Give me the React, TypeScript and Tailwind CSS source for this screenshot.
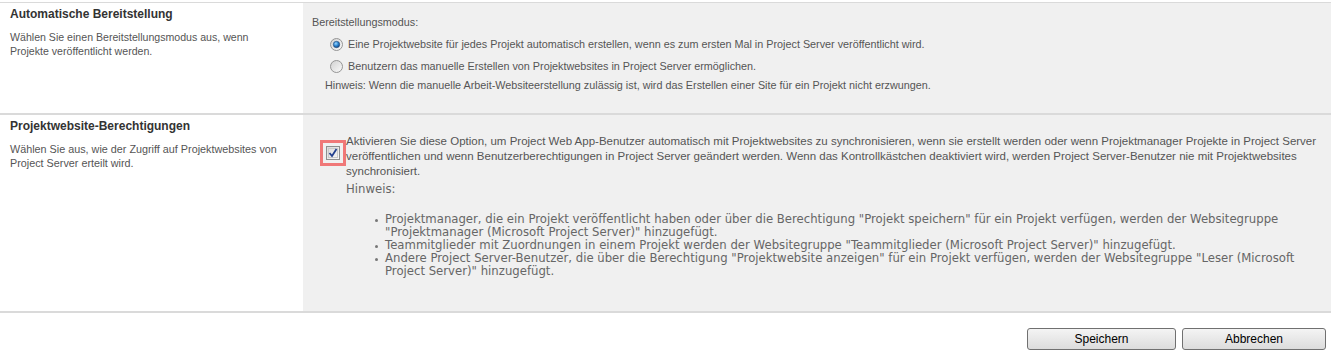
import React from "react";

const tahoma = { fontFamily: '"Liberation Sans", Arial, sans-serif' };
const verdana = { fontFamily: '"DejaVu Sans", Verdana, sans-serif' };

function Radio({ checked }: { checked: boolean }) {
  return (
    <svg width="13" height="13" viewBox="0 0 13 13" className="shrink-0">
      <defs>
        <linearGradient id={checked ? "rg1" : "rg0"} x1="0" y1="0" x2="1" y2="1">
          <stop offset="0" stopColor="#d0d0d0" />
          <stop offset="1" stopColor="#fbfbfb" />
        </linearGradient>
        <radialGradient id="dot" cx="0.4" cy="0.35" r="0.7">
          <stop offset="0" stopColor="#9fd7ff" />
          <stop offset="0.5" stopColor="#2d87d2" />
          <stop offset="1" stopColor="#0c3c7a" />
        </radialGradient>
      </defs>
      <circle cx="6.5" cy="6.5" r="6" fill={`url(#${checked ? "rg1" : "rg0"})`} stroke="#959595" strokeWidth="1" />
      {checked && <circle cx="6.5" cy="6.5" r="3.2" fill="url(#dot)" stroke="#274a78" strokeWidth="0.6" />}
    </svg>
  );
}

function Bullet({ lines }: { lines: string[] }) {
  return (
    <div className="flex">
      <div className="w-[11px] shrink-0 flex justify-start pt-[6px] pl-[1px]">
        <div className="w-[3px] h-[3px] rounded-full bg-[#777]" />
      </div>
      <div>
        {lines.map((l, i) => (
          <div key={i} className="whitespace-nowrap leading-[13px]">{l}</div>
        ))}
      </div>
    </div>
  );
}

export default function App() {
  return (
    <div className="w-[1333px] h-[351px] bg-white text-[10.8px] text-[#555]" style={tahoma}>
      <div className="w-[1331px] pt-[2px]">
        <div className="border-t border-[#dadada]" />
        {/* Section 1 */}
        <div className="flex h-[110px]">
          <div className="w-[303px] shrink-0 pl-[10px] pt-[4px]">
            <div className="font-bold text-[#333] leading-[14px] text-[12px]">Automatische Bereitstellung</div>
            <div className="mt-[9px] leading-[14px] text-[10.6px]">
              <div className="whitespace-nowrap">Wählen Sie einen Bereitstellungsmodus aus, wenn</div>
              <div className="whitespace-nowrap">Projekte veröffentlicht werden.</div>
            </div>
          </div>
          <div className="flex-1 bg-[#f0f0f0] pl-[9px] pt-[12px]">
            <div className="leading-[14px]">Bereitstellungsmodus:</div>
            <div className="mt-[8px] flex items-center pl-[18px] h-[14px]">
              <Radio checked />
              <span className="ml-[5px] whitespace-nowrap">Eine Projektwebsite für jedes Projekt automatisch erstellen, wenn es zum ersten Mal in Project Server veröffentlicht wird.</span>
            </div>
            <div className="mt-[8px] flex items-center pl-[18px] h-[14px]">
              <Radio checked={false} />
              <span className="ml-[5px] whitespace-nowrap">Benutzern das manuelle Erstellen von Projektwebsites in Project Server ermöglichen.</span>
            </div>
            <div className="mt-[5px] pl-[13px] leading-[14px] whitespace-nowrap">
              Hinweis: Wenn die manuelle Arbeit-Websiteerstellung zulässig ist, wird das Erstellen einer Site für ein Projekt nicht erzwungen.
            </div>
          </div>
        </div>
        <div className="border-t-2 border-[#dadada]" />
        {/* Section 2 */}
        <div className="flex h-[196px]">
          <div className="w-[303px] shrink-0 pl-[10px] pt-[4px]">
            <div className="font-bold text-[#333] leading-[14px] text-[12px]">Projektwebsite-Berechtigungen</div>
            <div className="mt-[9px] leading-[14px] text-[10.8px]">
              <div className="whitespace-nowrap">Wählen Sie aus, wie der Zugriff auf Projektwebsites von</div>
              <div className="whitespace-nowrap">Project Server erteilt wird.</div>
            </div>
          </div>
          <div className="flex-1 bg-[#f0f0f0] pl-[17px] pt-[19px]">
            <div className="flex">
              <div className="mt-[6px] w-[26px] h-[26px] shrink-0 border-[3px] border-[#f07878] flex items-center justify-center">
                <svg width="14" height="14" viewBox="0 0 14 14">
                  <defs>
                    <linearGradient id="cb" x1="0" y1="0" x2="1" y2="1">
                      <stop offset="0" stopColor="#d8d8d8" />
                      <stop offset="1" stopColor="#fafafa" />
                    </linearGradient>
                  </defs>
                  <rect x="0.5" y="0.5" width="13" height="13" fill="url(#cb)" stroke="#8e8f8f" />
                  <rect x="2.5" y="2.5" width="9" height="9" fill="none" stroke="#c9c9c9" />
                  <path d="M3.5 7 L6 10 L10.5 3" fill="none" stroke="#23408e" strokeWidth="1.8" />
                </svg>
              </div>
              <div>
                <div className="leading-[15px] text-[11.5px]">
                  <div className="whitespace-nowrap">Aktivieren Sie diese Option, um Project Web App-Benutzer automatisch mit Projektwebsites zu synchronisieren, wenn sie erstellt werden oder wenn Projektmanager Projekte in Project Server</div>
                  <div className="whitespace-nowrap">veröffentlichen und wenn Benutzerberechtigungen in Project Server geändert werden. Wenn das Kontrollkästchen deaktiviert wird, werden Project Server-Benutzer nie mit Projektwebsites</div>
                  <div className="whitespace-nowrap">synchronisiert.</div>
                </div>
                <div className="mt-[3px] leading-[14px] text-[#666] text-[11.7px]" style={verdana}>Hinweis:</div>
                <div className="mt-[17px] ml-[28px] text-[#666] text-[11.7px]" style={verdana}>
                  <Bullet lines={[
                    "Projektmanager, die ein Projekt veröffentlicht haben oder über die Berechtigung \"Projekt speichern\" für ein Projekt verfügen, werden der Websitegruppe",
                    "\"Projektmanager (Microsoft Project Server)\" hinzugefügt.",
                  ]} />
                  <Bullet lines={[
                    "Teammitglieder mit Zuordnungen in einem Projekt werden der Websitegruppe \"Teammitglieder (Microsoft Project Server)\" hinzugefügt.",
                  ]} />
                  <Bullet lines={[
                    "Andere Project Server-Benutzer, die über die Berechtigung \"Projektwebsite anzeigen\" für ein Projekt verfügen, werden der Websitegruppe \"Leser (Microsoft",
                    "Project Server)\" hinzugefügt.",
                  ]} />
                </div>
              </div>
            </div>
          </div>
        </div>
        <div className="border-t-2 border-[#dadada]" />
        <div className="flex justify-end pt-[15px] pr-[5px] gap-[6px]">
          <button className="w-[149px] h-[22px] rounded-[3px] border border-[#707070] bg-gradient-to-b from-[#f4f4f4] to-[#dcdcdc] text-[12px] text-black leading-[20px]" style={tahoma}>Speichern</button>
          <button className="w-[144px] h-[22px] rounded-[3px] border border-[#707070] bg-gradient-to-b from-[#f4f4f4] to-[#dcdcdc] text-[12px] text-black leading-[20px]" style={tahoma}>Abbrechen</button>
        </div>
      </div>
    </div>
  );
}
